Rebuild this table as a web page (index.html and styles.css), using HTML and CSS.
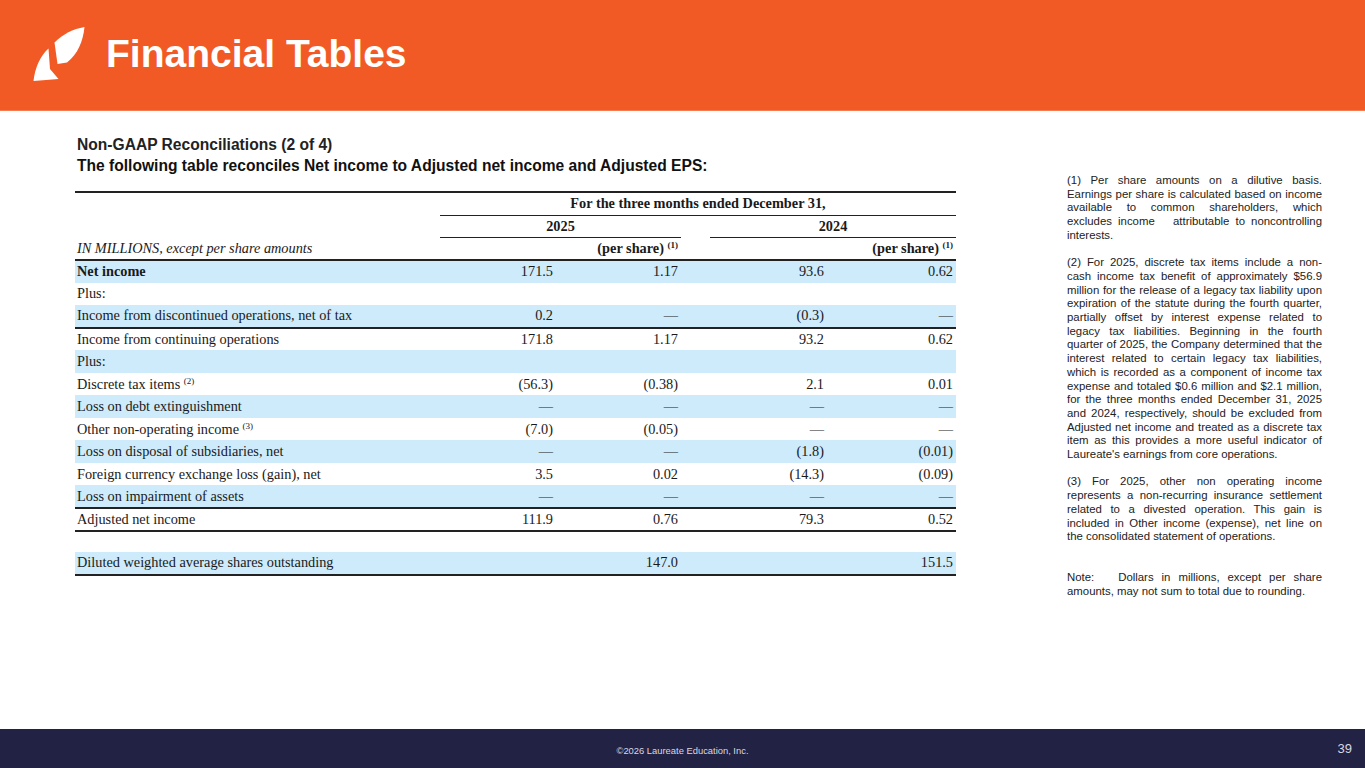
FILE: index.html
```html
<!DOCTYPE html>
<html lang="en">
<head>
<meta charset="utf-8">
<title>Financial Tables</title>
<link rel="stylesheet" href="styles.css">
</head>
<body>
<div class="slide">
  <header class="banner">
    <svg class="logo" viewBox="28 25 60 60" width="60" height="60" aria-hidden="true">
      <path d="M54.5,43.5 C63,35 73,30 84.5,28 C83,42 78,55 67,63.5 L57.5,65 Z" fill="#fff"/>
      <path d="M48.5,49.5 C40,57 35,69 33.5,82 L58.5,80 L50,70 Z" fill="#fff"/>
    </svg>
    <h1 class="title">Financial Tables</h1>
  </header>
  <main class="content">
    <section class="left">
      <h2 class="sub1">Non-GAAP Reconciliations (2 of 4)</h2>
      <h3 class="sub2">The following table reconciles Net income to Adjusted net income and Adjusted EPS:</h3>
      <table class="fin">
        <colgroup>
          <col class="c-label"><col class="c-v1"><col class="c-v2"><col class="c-gap"><col class="c-v3"><col class="c-v4">
        </colgroup>
        <thead>
          <tr class="h1">
            <th></th>
            <th colspan="5" class="ruled">For the three months ended December 31,</th>
          </tr>
          <tr class="h2">
            <th></th>
            <th colspan="2" class="ruled">2025</th>
            <th></th>
            <th colspan="2" class="ruled">2024</th>
          </tr>
          <tr class="h3">
            <th class="units">IN MILLIONS, except per share amounts</th>
            <th></th>
            <th class="ps">(per share) <sup>(1)</sup></th>
            <th></th>
            <th></th>
            <th class="ps">(per share) <sup>(1)</sup></th>
          </tr>
        </thead>
        <tbody>
          <tr class="blue bold-label"><td>Net income</td><td>171.5</td><td>1.17</td><td></td><td>93.6</td><td>0.62</td></tr>
          <tr><td>Plus:</td><td></td><td></td><td></td><td></td><td></td></tr>
          <tr class="blue rule"><td>Income from discontinued operations, net of tax</td><td>0.2</td><td>—</td><td></td><td>(0.3)</td><td>—</td></tr>
          <tr><td>Income from continuing operations</td><td>171.8</td><td>1.17</td><td></td><td>93.2</td><td>0.62</td></tr>
          <tr class="blue"><td>Plus:</td><td></td><td></td><td></td><td></td><td></td></tr>
          <tr><td>Discrete tax items <sup>(2)</sup></td><td>(56.3)</td><td>(0.38)</td><td></td><td>2.1</td><td>0.01</td></tr>
          <tr class="blue"><td>Loss on debt extinguishment</td><td>—</td><td>—</td><td></td><td>—</td><td>—</td></tr>
          <tr><td>Other non-operating income <sup>(3)</sup></td><td>(7.0)</td><td>(0.05)</td><td></td><td>—</td><td>—</td></tr>
          <tr class="blue"><td>Loss on disposal of subsidiaries, net</td><td>—</td><td>—</td><td></td><td>(1.8)</td><td>(0.01)</td></tr>
          <tr><td>Foreign currency exchange loss (gain), net</td><td>3.5</td><td>0.02</td><td></td><td>(14.3)</td><td>(0.09)</td></tr>
          <tr class="blue rule"><td>Loss on impairment of assets</td><td>—</td><td>—</td><td></td><td>—</td><td>—</td></tr>
          <tr class="rule"><td>Adjusted net income</td><td>111.9</td><td>0.76</td><td></td><td>79.3</td><td>0.52</td></tr>
          <tr class="spacer"><td colspan="6"></td></tr>
          <tr class="blue rule"><td>Diluted weighted average shares outstanding</td><td></td><td>147.0</td><td></td><td></td><td>151.5</td></tr>
        </tbody>
      </table>
    </section>
    <aside class="notes">
      <p>(1) Per share amounts on a dilutive basis. Earnings per share is calculated based on income available to common shareholders, which excludes income &nbsp; attributable to noncontrolling interests.</p>
      <p>(2) For 2025, discrete tax items include a non-cash income tax benefit of approximately $56.9 million for the release of a legacy tax liability upon expiration of the statute during the fourth quarter, partially offset by interest expense related to legacy tax liabilities. Beginning in the fourth quarter of 2025, the Company determined that the interest related to certain legacy tax liabilities, which is recorded as a component of income tax expense and totaled $0.6 million and $2.1 million, for the three months ended December 31, 2025 and 2024, respectively, should be excluded from Adjusted net income and treated as a discrete tax item as this provides a more useful indicator of Laureate's earnings from core operations.</p>
      <p>(3) For 2025, other non operating income represents a non-recurring insurance settlement related to a divested operation. This gain is included in Other income (expense), net line on the consolidated statement of operations.</p>
      <p class="note">Note: &nbsp; Dollars in millions, except per share amounts, may not sum to total due to rounding.</p>
    </aside>
  </main>
  <footer class="foot">
    <span class="copy">©2026 Laureate Education, Inc.</span>
    <span class="page">39</span>
  </footer>
</div>
</body>
</html>
```

FILE: styles.css
```css
* { box-sizing: border-box; }
html, body { margin: 0; padding: 0; background: #fff; }
body { font-family: "Liberation Sans", Arial, sans-serif; color: #222; }

.slide {
  width: 1365px;
  height: 768px;
  display: flex;
  flex-direction: column;
  overflow: hidden;
}

.banner {
  height: 111px;
  flex: none;
  background: #f15a24;
  border-bottom: 1px solid #f47c50;
  display: flex;
  align-items: center;
  padding-left: 28px;
}
.logo { flex: none; margin-top: -2px; }
.title {
  margin: 0 0 0 18px;
  font-size: 39px;
  font-weight: bold;
  color: #fff;
  line-height: 1;
  padding-bottom: 4px;
}

.content {
  flex: 1;
  display: flex;
  padding-left: 75px;
}
.left { width: 881px; flex: none; padding-top: 24px; }
.sub1 {
  margin: 0 0 0 2px;
  font-size: 15.6px;
  font-weight: bold;
  line-height: 19px;
  color: #222;
}
.sub2 {
  margin: 2px 0 0 2px;
  font-size: 15.6px;
  font-weight: bold;
  line-height: 19px;
  color: #111;
}

.fin {
  margin-top: 16px;
  width: 881px;
  border-collapse: collapse;
  table-layout: fixed;
  font-family: "Liberation Serif", "Times New Roman", serif;
  font-size: 14.3px;
  color: #1a1a1a;
  border-top: 2px solid #222;
}
.c-label { width: 365px; }
.c-v1 { width: 116px; }
.c-v2 { width: 125px; }
.c-gap { width: 29px; }
.c-v3 { width: 117px; }
.c-v4 { width: 129px; }

.fin th { font-weight: bold; padding: 0; text-align: center; white-space: nowrap; }
.fin thead .h1 th { height: 23px; }
.fin thead .h2 th { height: 22px; }
.fin th.ruled { border-bottom: 1.5px solid #222; }
.fin thead .h3 th { border-bottom: 2px solid #222; height: 23px; }
.fin th.units { font-weight: normal; font-style: italic; text-align: left; padding-left: 2px; }
.fin th.ps { text-align: right; padding-right: 3px; }

.fin sup { font-size: 9px; vertical-align: 5px; line-height: 0; }

.fin td {
  height: 22.55px;
  padding: 0 3px 0 0;
  text-align: right;
  white-space: nowrap;
}
.fin td:first-child { text-align: left; padding-left: 2px; }
.fin tr.blue td { background: #cdebfa; }
.fin tr.bold-label td:first-child { font-weight: bold; }
.fin tr.rule td { border-bottom: 2px solid #222; }
.fin tr.spacer td { height: 21.5px; background: #fff; }

.notes {
  width: 255px;
  margin-left: 111px;
  padding-top: 63px;
  font-size: 11.4px;
  line-height: 13.7px;
  color: #222;
  text-align: justify;
}
.notes p { margin: 0 0 13.7px 0; }
.notes p.note { margin-top: 27px; }

.foot {
  height: 39px;
  flex: none;
  background: #222244;
  position: relative;
  display: flex;
  align-items: center;
  justify-content: center;
}
.copy { font-size: 9.4px; color: #d8d8e0; padding-top: 4px; }
.page {
  position: absolute;
  right: 13px;
  top: 12px;
  font-size: 13px;
  color: #d8d8e0;
}
```
